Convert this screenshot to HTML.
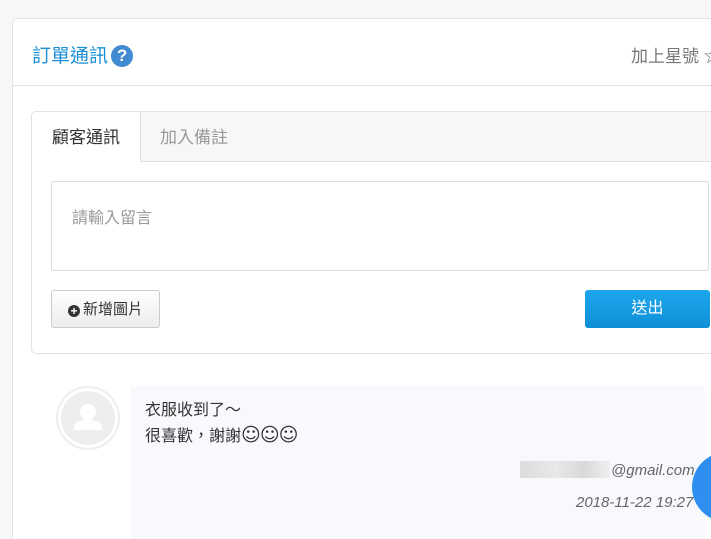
<!DOCTYPE html><html><head><meta charset="utf-8"><style>
html{height:539px;overflow:hidden}
body{margin:0;width:711px;height:539px;overflow:hidden;background:#f7f7f7;font-family:"Liberation Sans","Noto Sans CJK TC",sans-serif;position:relative}
.card{position:absolute;left:12px;top:18px;width:720px;height:540px;background:#fff;border:1px solid #e3e3e3;border-bottom:none;border-radius:5px 5px 0 0}
.hd{position:absolute;left:0;top:0;right:0;height:66px;border-bottom:1px solid #e0e0e0}
.t{position:absolute;left:19px;top:22px;font-size:19px;color:#1a8fd6}
.q{display:inline-block;width:22px;height:22px;border-radius:50%;background:#3f8ad0;color:#fff;font-weight:bold;font-size:17px;text-align:center;line-height:22px;vertical-align:1px;margin-left:3px}
.star{position:absolute;left:618px;top:23px;font-size:17px;color:#777}
.panel{position:absolute;left:31px;top:111px;width:700px;height:241px;border:1px solid #e3e3e3;border-radius:5px;background:#fff}
.tabs{position:absolute;left:0;top:0;right:0;height:49px;background:#f7f7f7;border-bottom:1px solid #e0e0e0;border-radius:5px 5px 0 0}
.tab1{position:absolute;left:0;top:0;width:108px;height:50px;background:#fff;border-right:1px solid #e0e0e0;border-radius:5px 0 0 0;font-size:17px;color:#333;line-height:52px;text-align:center}
.tab2{position:absolute;left:128px;top:0;font-size:17px;color:#999;line-height:52px}
.ta{position:absolute;left:51px;top:181px;width:656px;height:88px;border:1px solid #ddd;border-radius:2px;background:#fff}
.ta span{position:absolute;left:20px;top:22px;font-size:16px;color:#999}
.b1{position:absolute;left:51px;top:290px;width:107px;height:36px;border:1px solid #ccc;border-radius:3px;background:linear-gradient(#fff,#ececec);font-size:15px;color:#333;line-height:37px;box-sizing:content-box}
.b1 i{display:inline-block;width:12px;height:12px;border-radius:50%;background:#333;color:#fff;font-style:normal;font-size:12px;line-height:12px;text-align:center;font-weight:bold;margin:0 3px 0 16px;vertical-align:-1px}
.b2{position:absolute;left:585px;top:290px;width:125px;height:38px;border-radius:3px;background:linear-gradient(#1ea7ee,#0e8fd8);color:#fff;font-size:16px;line-height:38px;text-align:center}
.av{position:absolute;left:56px;top:386px;width:60px;height:60px;border-radius:50%;border:2px solid #eee;background:#eee;box-shadow:inset 0 0 0 3px #fff}
.msg{position:absolute;left:131px;top:386px;width:574px;height:160px;background:#f8f9fd}
.m1{position:absolute;left:145px;top:399px;font-size:16px;color:#333;line-height:24px}
.m1 b{font-weight:normal;font-size:19px;font-family:"DejaVu Sans",sans-serif;letter-spacing:-1px}
.em{position:absolute;left:520px;top:461px;width:90px;height:17px;background:linear-gradient(90deg,#ddd,#e8e8e8 40%,#d9d9d9 70%,#eee)}
.mail{position:absolute;left:611px;top:462px;font-size:15px;color:#666;font-style:italic}
.dt{position:absolute;left:576px;top:494px;font-size:15px;color:#666;font-style:italic}
.fab{position:absolute;left:692px;top:452px;width:70px;height:70px;border-radius:50%;background:#2f8ff0}
</style></head><body>
<div class="card"><div class="hd"><div class="t">訂單通訊<span class="q">?</span></div><div class="star">加上星號 ☆</div></div></div>
<div class="panel"><div class="tabs"><div class="tab1">顧客通訊</div><div class="tab2">加入備註</div></div></div>
<div class="ta"><span>請輸入留言</span></div>
<div class="b1"><i>+</i>新增圖片</div>
<div class="b2">送出</div>
<div class="av"><svg width="60" height="60" viewBox="0 0 60 60"><circle cx="30" cy="24" r="8" fill="#fff"/><path d="M16 40q0-8 14-8t14 8v2H16z" fill="#fff"/></svg></div>
<div class="msg"></div>
<div class="m1">衣服收到了～<br>很喜歡，謝謝<b>☺☺☺</b></div>
<div class="em"></div><div class="mail">@gmail.com</div>
<div class="dt">2018-11-22 19:27</div>
<div class="fab"></div>
</body></html>
